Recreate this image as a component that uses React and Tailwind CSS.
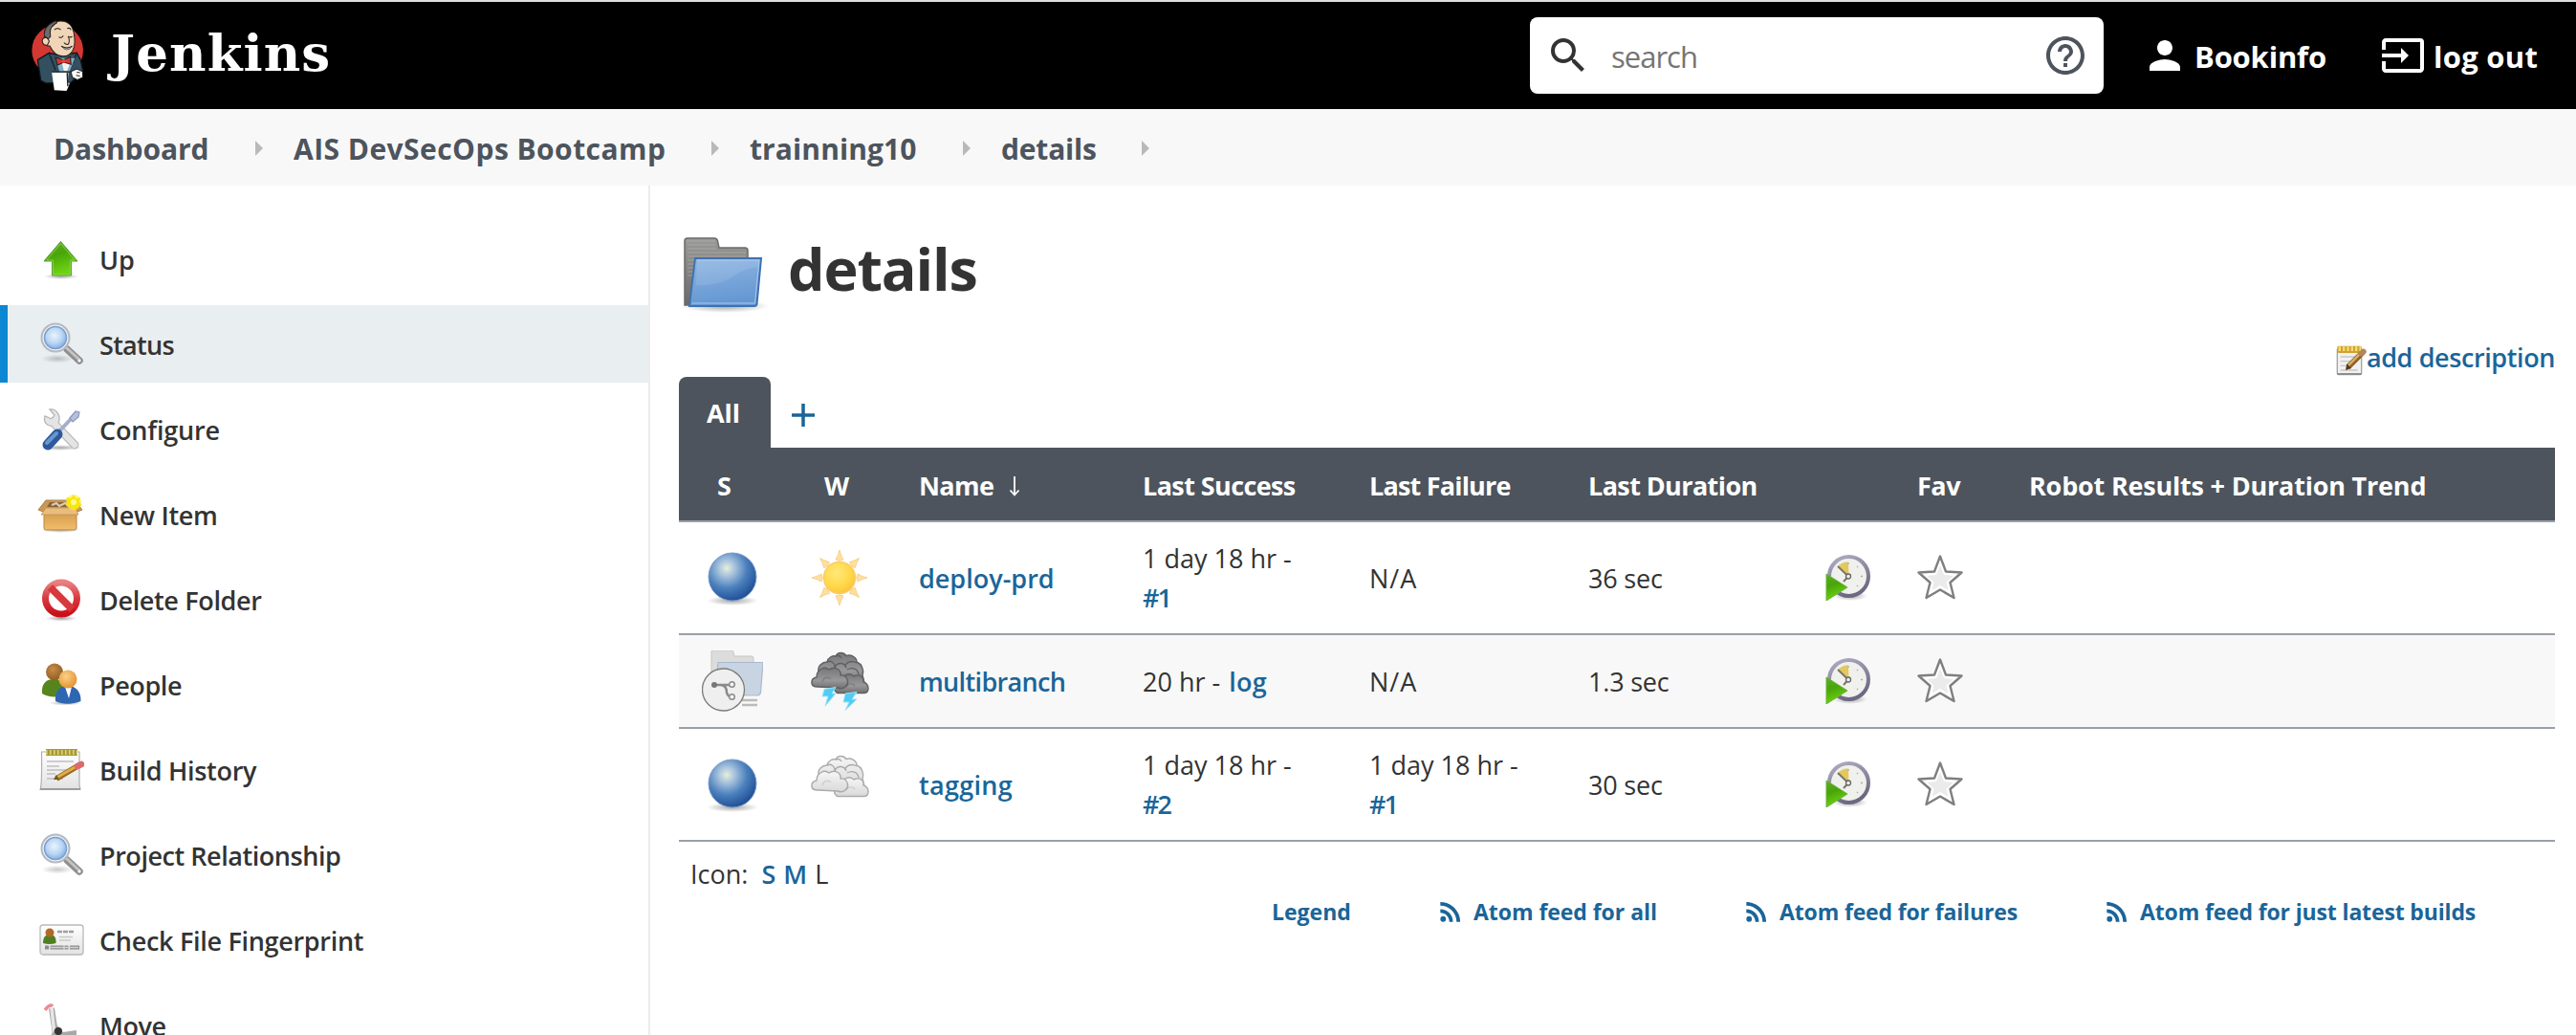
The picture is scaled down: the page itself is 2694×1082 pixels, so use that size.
import { MdSearch, MdHelpOutline, MdPerson, MdInput, MdRssFeed } from "react-icons/md";

function Gradients() {
  return (
    <svg className="absolute h-0 w-0" aria-hidden="true">
      <defs>
        <radialGradient id="ball" cx="0.38" cy="0.32" r="0.7">
          <stop offset="0" stopColor="#e6efdf" />
          <stop offset="0.25" stopColor="#a5c1dc" />
          <stop offset="0.6" stopColor="#4b80bd" />
          <stop offset="1" stopColor="#1f4f96" />
        </radialGradient>
        <radialGradient id="sun" cx="0.4" cy="0.35" r="0.7">
          <stop offset="0" stopColor="#ffe97a" />
          <stop offset="0.6" stopColor="#ffd94a" />
          <stop offset="1" stopColor="#fcc13c" />
        </radialGradient>
        <radialGradient id="lens" cx="0.45" cy="0.4" r="0.6">
          <stop offset="0" stopColor="#eaf4fd" />
          <stop offset="0.6" stopColor="#b9d6f4" />
          <stop offset="1" stopColor="#86b0e2" />
        </radialGradient>
        <radialGradient id="shade">
          <stop offset="0" stopColor="#000" stopOpacity="0.35" />
          <stop offset="1" stopColor="#000" stopOpacity="0" />
        </radialGradient>
        <linearGradient id="green" x1="0" y1="0" x2="0.3" y2="1">
          <stop offset="0" stopColor="#5fae2b" />
          <stop offset="0.45" stopColor="#48a508" />
          <stop offset="1" stopColor="#6fd412" />
        </linearGradient>
        <linearGradient id="red" x1="0" y1="0" x2="0" y2="1">
          <stop offset="0" stopColor="#e98080" />
          <stop offset="0.5" stopColor="#d83a3e" />
          <stop offset="1" stopColor="#c9101a" />
        </linearGradient>
        <linearGradient id="box" x1="0" y1="0" x2="0" y2="1">
          <stop offset="0" stopColor="#d29a4c" />
          <stop offset="1" stopColor="#f2bd6b" />
        </linearGradient>
        <linearGradient id="folderBlue" x1="0" y1="0" x2="0.2" y2="1">
          <stop offset="0" stopColor="#8fb6e2" />
          <stop offset="0.5" stopColor="#7aa6da" />
          <stop offset="1" stopColor="#6497d2" />
        </linearGradient>
        <linearGradient id="folderGray" x1="0" y1="0" x2="0" y2="1">
          <stop offset="0" stopColor="#9a9a97" />
          <stop offset="1" stopColor="#6a6a68" />
        </linearGradient>
        <linearGradient id="dark" x1="0" y1="0" x2="0" y2="1">
          <stop offset="0" stopColor="#77777a" />
          <stop offset="0.6" stopColor="#98989a" />
          <stop offset="1" stopColor="#707073" />
        </linearGradient>
        <linearGradient id="light" x1="0" y1="0" x2="0" y2="1">
          <stop offset="0" stopColor="#f6f6f6" />
          <stop offset="1" stopColor="#d9d9d9" />
        </linearGradient>
        <linearGradient id="paper" x1="0" y1="0" x2="0" y2="1">
          <stop offset="0" stopColor="#ffffff" />
          <stop offset="1" stopColor="#e2e2e2" />
        </linearGradient>
        <radialGradient id="brown" cx="0.4" cy="0.35" r="0.7">
          <stop offset="0" stopColor="#c58c4c" />
          <stop offset="1" stopColor="#8f5a1e" />
        </radialGradient>
        <radialGradient id="orange" cx="0.4" cy="0.35" r="0.7">
          <stop offset="0" stopColor="#fbd08a" />
          <stop offset="1" stopColor="#e3912a" />
        </radialGradient>
        <linearGradient id="rim" x1="0" y1="0" x2="0.4" y2="1">
          <stop offset="0" stopColor="#b0aec3" />
          <stop offset="1" stopColor="#6d6983" />
        </linearGradient>
      </defs>
    </svg>
  );
}

function Butler() {
  return (
    <svg viewBox="34 26 170 232" className="h-[78px] w-[57px]">
      <circle cx="118" cy="126" r="80" fill="#d33833" />
      <path d="M56 156L92 134L118 140L178 134L190 156L197 190L160 226L82 228L66 220Z" fill="#335061" stroke="#101820" strokeWidth="4" />
      <path d="M92 136L112 188M176 138L156 190" stroke="#16242e" strokeWidth="4" />
      <path d="M112 150L172 150L156 192L124 192Z" fill="#81b0c4" />
      <path d="M130 160L160 160L148 190L138 190Z" fill="#f3f3f3" />
      <path d="M84 66C92 40 122 28 146 38C164 46 170 66 171 88C173 116 166 136 146 143C122 148 104 134 94 112C78 114 68 98 78 84Z" fill="#f0d6b7" stroke="#231f20" strokeWidth="3" />
      <path d="M78 82C72 62 88 44 112 34L116 40C102 48 94 58 95 70L96 84L88 90Z" fill="#6d6b6d" stroke="#231f20" strokeWidth="3" />
      <path d="M76 88C66 92 70 112 86 110L92 98C88 86 80 84 76 88Z" fill="#f0d6b7" stroke="#231f20" strokeWidth="3" />
      <path d="M108 62Q118 54 128 62M148 58Q156 54 160 62M122 84Q130 90 136 80M150 82Q158 88 164 82M152 84Q158 100 150 108Q142 108 138 102M130 113Q146 124 164 113" fill="none" stroke="#231f20" strokeWidth="3" />
      <path d="M132 114Q146 125 162 114Q158 124 146 124Q137 122 132 114Z" fill="#fff" stroke="#231f20" strokeWidth="2" />
      <path d="M112 148L136 156L158 146L160 170L138 163L118 172Z" fill="#d33833" stroke="#231f20" strokeWidth="3" />
      <circle cx="137" cy="160" r="6" fill="#ef3d3a" />
      <path d="M100 194L152 194L150 226L156 228L152 240L146 252L108 250Z" fill="#fff" />
      <path d="M100 193H158M148 196L150 238" stroke="#231f20" strokeWidth="4" fill="none" />
      <path d="M160 192L178 184L196 192L197 210L180 218L164 210Z" fill="#fff" stroke="#231f20" strokeWidth="3" />
      <path d="M178 194L188 196M176 204L188 206" stroke="#231f20" strokeWidth="3" />
    </svg>
  );
}

const art = {
  up: (
    <>
      <ellipse cx="24" cy="42" rx="18" ry="3" fill="url(#shade)" />
      <path d="M23.500 5.500L41 26H34.500V41H14.500V26H6Z" fill="url(#green)" stroke="#5d9e3a" strokeWidth="1" />
      <path d="M23.500 7.500L38 25H33.500V40H15.500V25H9Z" fill="none" stroke="#8fd457" strokeWidth="0.800" />
    </>
  ),
  search: (
    <>
      <ellipse cx="20" cy="39" rx="17" ry="4.500" fill="url(#shade)" opacity="0.600" />
      <path d="M30 29L43 41" stroke="#8f8f8f" strokeWidth="7.500" strokeLinecap="round" />
      <path d="M30 28L43 40" stroke="#c4c4c4" strokeWidth="3" strokeLinecap="round" />
      <circle cx="43" cy="41" r="1.600" fill="#fff" />
      <circle cx="18" cy="17" r="14.500" fill="#e9eef5" stroke="#b5b9c0" strokeWidth="2" />
      <circle cx="18" cy="17" r="11.500" fill="url(#lens)" stroke="#7c9fce" strokeWidth="1.500" />
    </>
  ),
  tools: (
    <>
      <ellipse cx="23" cy="43" rx="22" ry="3" fill="url(#shade)" />
      <path d="M15 16L38 40" stroke="#b9b9b9" strokeWidth="9" strokeLinecap="round" />
      <path d="M12 3L17 9L14 13L7 10C5 16 9 21 15 20L21 17C24 11 20 2 12 3Z" fill="#e6e6e6" stroke="#b5b5b5" strokeWidth="1.300" />
      <path d="M15 16L38 40" stroke="#e4e4e4" strokeWidth="6.500" strokeLinecap="round" />
      <path d="M37 10L20 28" stroke="#a5aecb" strokeWidth="4" />
      <path d="M33 12L39 5L43 6L42 11L36 16Z" fill="#b6bfdb" stroke="#8d97bb" strokeWidth="1.200" />
      <path d="M20 29L10 40" stroke="#2d599c" strokeWidth="11" strokeLinecap="round" />
      <path d="M19 28L9 38" stroke="#6796d2" strokeWidth="4" strokeLinecap="round" />
    </>
  ),
  box: (
    <>
      <ellipse cx="23" cy="40" rx="20" ry="3" fill="url(#shade)" />
      <path d="M8 9L38 9L46 19L38 22H8L0 19Z" fill="#c99858" stroke="#b07f3e" />
      <path d="M12 11H34L37 16H9Z" fill="#8a6334" />
      <path d="M14 14L19 12L22 15L28 12L32 15" stroke="#d9cdb9" strokeWidth="2" fill="none" />
      <path d="M6 20H40V38Q40 40 38 40H8Q6 40 6 38Z" fill="url(#box)" stroke="#b98443" />
      <path d="M8 17H39L42 24H3Z" fill="#e8bd80" stroke="#c4924f" strokeWidth="0.800" />
      <circle cx="37" cy="11" r="8" fill="#fbef62" opacity="0.700" />
      <path d="M37 3L39.500 7L44 6L43 11L46 14L41 16L38 20L34 16L29 15L31 10L29 6L34 7Z" fill="#fae800" />
      <circle cx="37" cy="11" r="3" fill="#fdf7a0" />
    </>
  ),
  stop: (
    <>
      <ellipse cx="24" cy="43.500" rx="17" ry="3" fill="url(#shade)" />
      <circle cx="24" cy="22.500" r="16.500" fill="#fff" stroke="url(#red)" strokeWidth="7" />
      <path d="M12.500 11L35.500 34" stroke="#d8383c" strokeWidth="7.500" />
    </>
  ),
  people: (
    <>
      <ellipse cx="28" cy="43" rx="17" ry="2.500" fill="url(#shade)" />
      <path d="M4 33C3 22 9 18 16 18C24 18 29 24 28 34C20 38 10 37 4 33Z" fill="#56851e" />
      <circle cx="17" cy="10.500" r="9" fill="url(#brown)" />
      <path d="M18 41C17 30 23 25 31 25C39 25 45 31 44.500 41C36 44.500 26 44.500 18 41Z" fill="#2f66b2" />
      <path d="M28 26H35L32 38Z" fill="#fff" />
      <circle cx="31" cy="18" r="9.500" fill="url(#orange)" />
    </>
  ),
  notepad: (
    <>
      <path d="M3.500 5H43V40Q44 43 44 44.500H2Q4 40 3.500 5Z" fill="url(#paper)" stroke="#b0b0b0" strokeWidth="1.200" />
      <path d="M2 44H44" stroke="#9c9c9c" strokeWidth="2" />
      <path d="M8 2H41V9H8Z" fill="#a89a34" />
      <path d="M8 5.500H41" stroke="#ded37c" strokeWidth="5" strokeDasharray="1.500 2.500" />
      <path d="M9 15H37M9 20H22M9 24H30M9 28H18M9 33H26" stroke="#bdbdc3" strokeWidth="1.300" />
      <path d="M19 33L41 20" stroke="#9a6a1d" strokeWidth="6" />
      <path d="M20 31.500L41 19.500" stroke="#e0ad49" strokeWidth="3" />
      <path d="M16 34L19 29L22 34Z" fill="#6c5a20" />
      <path d="M41 20L45 18" stroke="#dd6a6a" strokeWidth="6.500" strokeLinecap="round" />
    </>
  ),
  edit: (
    <>
      <rect x="2" y="5" width="38" height="41" rx="2" fill="#f1f1f1" stroke="#a3a3a3" strokeWidth="2" />
      <path d="M2 45H40" stroke="#8d8d8d" strokeWidth="3" />
      <rect x="2" y="1" width="38" height="11" rx="2" fill="#cfa22f" />
      <path d="M4 5.500H39" stroke="#f6dd75" strokeWidth="7" strokeDasharray="3.500 3" />
      <path d="M7 18H32M7 25H24M7 32H20M7 39H34" stroke="#c6c6cc" strokeWidth="2" />
      <path d="M19 34L41 12" stroke="#8d6128" strokeWidth="9" />
      <path d="M19 32L41 10" stroke="#dcae66" strokeWidth="4" />
      <path d="M15 39L17 29L24 36Z" fill="#4b3a22" />
      <path d="M40 13L43 10" stroke="#b0875a" strokeWidth="9" strokeLinecap="round" />
    </>
  ),
  card: (
    <>
      <rect x="2" y="8" width="45" height="31" rx="3" fill="url(#paper)" stroke="#b9b9b9" strokeWidth="1.300" />
      <path d="M5 27C5 20 8 18 12 18C16 18 19 20 18.500 27Q12 29 5 27Z" fill="#4f7f22" />
      <circle cx="12" cy="16" r="4.500" fill="#b06a27" />
      <path d="M20 15H38" stroke="#9f9f9f" strokeWidth="2.500" strokeDasharray="5 1" />
      <path d="M22 20.500H36M22 24H34" stroke="#c9c9c9" strokeWidth="1.300" />
      <path d="M7 31.500H43" stroke="#8c8c8c" strokeWidth="4" strokeDasharray="4 1.500 14 1" />
      <path d="M11 31.500H42" stroke="#d2d2d2" strokeWidth="1.500" />
    </>
  ),
  dolly: (
    <>
      <path d="M14 6L18 33" stroke="#a5a5a5" strokeWidth="6" />
      <path d="M14 6L17 33" stroke="#e6e6e6" strokeWidth="3.500" />
      <path d="M7 8Q12 1 15 4" stroke="#e58e96" strokeWidth="3.500" fill="none" />
      <path d="M14 33L20 24L26 31L40 29V36H12Z" fill="#a8a8a8" />
      <circle cx="21" cy="30" r="4" fill="#333" />
    </>
  ),
};

function Icon({ name, className }) {
  return (
    <svg viewBox="0 0 48 48" className={className || "h-12 w-12 shrink-0"}>
      {art[name]}
    </svg>
  );
}

function Folder() {
  return (
    <svg viewBox="0 0 96 96" className="h-24 w-24 shrink-0">
      <ellipse cx="48" cy="88" rx="46" ry="7" fill="url(#shade)" />
      <path d="M6 87V20Q6 17 9 17H37Q40 17 40.500 20L42 27H69Q72 27 72 30V60L70 87Z" fill="url(#folderGray)" stroke="#6b6b69" strokeWidth="1.500" />
      <path d="M8 20H38M9 24H38M9 28H39M9 32H70M9 36H70M9 40H16M9 44H16M9 48H16M9 52H15M9 56H15" stroke="#b5b5b2" strokeWidth="1" opacity="0.600" />
      <path d="M17 38H86L81.500 86Q81 88 79 88H11Q14 62 17 38Z" fill="url(#folderBlue)" stroke="#3f72b0" strokeWidth="2" />
      <path d="M19 40H84L79.500 85H13.500" fill="none" stroke="#a8c8ee" strokeWidth="1" />
      <path d="M18 66Q40 68 58 56Q70 48 83 47L84 40H19Z" fill="#fff" opacity="0.100" />
    </svg>
  );
}

function Ball() {
  return (
    <svg viewBox="0 0 64 64" className="h-16 w-16">
      <ellipse cx="32" cy="56" rx="27" ry="5" fill="url(#shade)" />
      <circle cx="32" cy="31" r="25" fill="url(#ball)" stroke="#7d9cc8" strokeWidth="1" />
    </svg>
  );
}

function BranchFolder() {
  return (
    <svg viewBox="0 0 64 64" className="h-16 w-16">
      <path d="M10 40V1Q10 0 11 0H31Q33 0 33 2L34 6H52Q54 6 54 8V40Z" fill="#dcdcdb" stroke="#c6c6c6" />
      <path d="M17 12.500H64L61.500 44Q61 46 59 47H14Z" fill="#c8d4e1" stroke="#a9bad0" strokeWidth="1.200" />
      <path d="M42 52H58M42 57H58" stroke="#bdbab6" strokeWidth="2.500" />
      <circle cx="22.500" cy="41" r="22" fill="#efefef" stroke="#7b7b7b" strokeWidth="1.300" />
      <path d="M13 36H30M19 36Q26 36 26 44Q27 48 30 48" fill="none" stroke="#8a8a8a" strokeWidth="2.500" />
      <circle cx="13" cy="36" r="3" fill="#777" />
      <circle cx="31.500" cy="35.500" r="2.800" fill="#f4f4f4" stroke="#8a8a8a" strokeWidth="1.500" />
      <circle cx="31.500" cy="48.500" r="2.800" fill="#f4f4f4" stroke="#8a8a8a" strokeWidth="1.500" />
    </svg>
  );
}

function Sun() {
  const rays = [0, 45, 90, 135, 180, 225, 270, 315];
  return (
    <svg viewBox="0 0 64 64" className="h-16 w-16">
      {rays.map((a) => (
        <path key={a} d="M28 13Q31 8 32 3Q33 8 36 13Q32 15.500 28 13Z" fill="#fce0a0" stroke="#fad28a" strokeWidth="1" transform={`rotate(${a} 32 32)`} />
      ))}
      <circle cx="32" cy="32" r="16.500" fill="url(#sun)" stroke="#fbcb6a" strokeWidth="1.500" />
    </svg>
  );
}

function CloudShape({ fill, line }) {
  return (
    <g fill={fill} stroke={line} strokeWidth="1.400" strokeLinejoin="round">
      <path d="M8 20C7 14 12 10 17 10C18 5 23 3 26 4C28 -0.500 34 -0.500 37 3.500C42 2 48 5 48 10C53 12 56 18 54 24L56 32H6Z" />
      <path d="M17 10C21 8 25 11 25 15M26 4C29 3 31 4 32 6M36 15C36 10 43 8 48 11M25 16C27 10 35 10 37 16M38 18C43 15 49 17 50 23" fill="none" />
      <path d="M27 42C22 38 26 31 33 32C32 24 40 20 45 25C51 22 56 26 55 31C61 33 62 42 56 42.500H28Z" />
      <path d="M7 36C-1.500 36 -0.500 27 6 26C6 18 14 14 19 18C25 14 32 18 31 24C38 23 41 32 36 36Q33 39 28 37Z" />
      <path d="M12 31C13 26 18 25 21 28M37 36C39 32 44 32 46 35" fill="none" opacity="0.400" />
    </g>
  );
}

function Storm() {
  return (
    <svg viewBox="0 0 64 64" className="h-16 w-16">
      <g transform="translate(2 2)">
        <CloudShape fill="url(#dark)" line="#606063" />
      </g>
      <path d="M16 40.500L28 38.500L24 45H28L17 58L20 48H14Z" fill="#4fcdf4" stroke="#9fe3fa" strokeWidth="1" />
      <path d="M38 45L50 43.500L45 51H50L38 62.500L42 54H36Z" fill="#4fcdf4" stroke="#9fe3fa" strokeWidth="1" />
    </svg>
  );
}

function Cloudy() {
  return (
    <svg viewBox="0 0 64 64" className="h-16 w-16">
      <g transform="translate(2 2)">
        <CloudShape fill="url(#light)" line="#ababab" />
      </g>
    </svg>
  );
}

function Schedule() {
  return (
    <svg viewBox="0 0 48 48" className="h-12 w-12">
      <ellipse cx="26" cy="43" rx="18" ry="5" fill="url(#shade)" />
      <circle cx="24.500" cy="22.500" r="20.500" fill="#f0f0ec" stroke="url(#rim)" strokeWidth="4" />
      <path d="M12.500 13Q17 7 24 7.500L24.500 22Z" fill="#e2c85f" />
      <path d="M13 12L24 22.500L19 28" fill="none" stroke="#7a7668" strokeWidth="2" />
      <circle cx="24" cy="22.500" r="2.500" fill="#eee" stroke="#666" strokeWidth="1.300" />
      <path d="M24 8V10M39 22.500H37M34 12L33 13M34 33L33 32" stroke="#aaa" strokeWidth="1.300" />
      <path d="M1 20L23 34L1 48Z" fill="url(#green)" stroke="#6ab43b" strokeWidth="1" />
    </svg>
  );
}

function Star() {
  return (
    <svg viewBox="0 0 48 48" className="h-12 w-12">
      <path d="M24 1.500L30 17.500L46.500 18.500L34.500 29L38.500 45L24 36.500L9.500 45L13.500 29L1.500 18.500L18 17.500Z" fill="#fff" stroke="#7f7f7f" strokeWidth="2.400" strokeLinejoin="round" />
      <path d="M24 11L28 21L38 22L30.500 28.500L32.500 37L24 32L15.500 37L17.500 28.500L10 22L20 21Z" fill="#ebebeb" />
    </svg>
  );
}

const cols = "grid grid-cols-[112px_124px_234px_237px_229px_248px_96px_117px_565px] items-center";

const tasks = [
  ["Up", "up", ""],
  ["Status", "search", "tracking-[-0.7px]"],
  ["Configure", "tools", "tracking-[-0.15px]"],
  ["New Item", "box", "tracking-[-0.3px]"],
  ["Delete Folder", "stop", "tracking-[-0.35px]"],
  ["People", "people", "tracking-[-0.4px]"],
  ["Build History", "notepad", "tracking-[-0.3px]"],
  ["Project Relationship", "search", "tracking-[-0.45px]"],
  ["Check File Fingerprint", "card", "tracking-[-0.3px]"],
  ["Move", "dolly", "tracking-[-0.4px]"],
];

function Crumb({ children, width, tracking }) {
  return (
    <div className={`flex items-center justify-between ${width}`}>
      <span className={tracking}>{children}</span>
      <span className="-mt-[1px] h-0 w-0 border-y-8 border-l-8 border-y-transparent border-l-[#b9b9b9]" />
    </div>
  );
}

function Age({ text, link }) {
  return (
    <div className="pl-[15px] leading-[41.5px]">
      <div className="whitespace-nowrap">{text}</div>
      <a className="font-semibold tracking-[-2px] text-[#1a6599]">{link}</a>
    </div>
  );
}

function Row({ status, weather, name, tracking, success, failure, duration, className }) {
  return (
    <div className={`${cols} border-b-2 border-[#9a9fa8] ${className}`}>
      <div className="pl-6">{status}</div>
      <div className="pl-6">{weather}</div>
      <a className={`pl-[15px] pt-[2px] font-semibold text-[#1a6599] ${tracking}`}>{name}</a>
      {success}
      {failure}
      <div className="pl-[15px] pt-[2px] tracking-[-0.2px]">{duration}</div>
      <div className="pl-[15px]"><Schedule /></div>
      <div className="pl-[15px]"><Star /></div>
      <div />
    </div>
  );
}

function Feed({ children, tracking }) {
  return (
    <a className="flex items-center gap-[8px]">
      <MdRssFeed size={32} />
      <span className={tracking}>{children}</span>
    </a>
  );
}

export default function App() {
  return (
    <div className="flex h-[1082px] w-[2694px] flex-col overflow-hidden whitespace-nowrap bg-white font-['Open_Sans','Noto_Sans',sans-serif] text-[27px] text-[#333]">
      <Gradients />
      <header className="flex h-[114px] shrink-0 items-center border-t-2 border-[#dcdfe2] bg-black text-[31px] font-bold text-white">
        <div className="flex w-[1600px] items-center pl-8">
          <Butler />
          <span className="-mt-[5px] ml-[27px] font-['DejaVu_Serif',serif] text-[53px] leading-none tracking-[1.1px]">Jenkins</span>
        </div>
        <div className="flex h-20 w-[600px] items-center rounded-lg bg-white pl-4 pr-4 font-normal">
          <MdSearch size={48} color="#333" />
          <span className="ml-[21px] mt-[3px] flex-1 tracking-[-1px] text-[#757575]">search</span>
          <MdHelpOutline size={48} color="#4d545d" />
        </div>
        <div className="ml-10 flex items-center">
          <MdPerson size={48} />
          <span className="ml-[7px] mt-[3px] tracking-[-0.2px]">Bookinfo</span>
        </div>
        <div className="ml-[56px] flex items-center">
          <MdInput size={48} />
          <span className="ml-[8px] mt-[3px] tracking-[0.3px]">log out</span>
        </div>
      </header>

      <nav className="flex h-20 shrink-0 gap-8 bg-[#f8f8f8] pl-[56px] pt-[2px] text-[30px] font-bold text-[#4d545d]">
        <Crumb width="w-[219px]" tracking="tracking-[-0.1px]">Dashboard</Crumb>
        <Crumb width="w-[445px]" tracking="tracking-[0.45px]">AIS DevSecOps Bootcamp</Crumb>
        <Crumb width="w-[231px]" tracking="tracking-[0.1px]">trainning10</Crumb>
        <Crumb width="w-[155px]" tracking="tracking-[-0.2px]">details</Crumb>
      </nav>

      <div className="flex min-h-0 flex-1">
        <aside className="flex w-[680px] shrink-0 flex-col gap-2 border-r-2 border-[#ececec] pt-9">
          {tasks.map(([label, icon, tracking]) => (
            <div
              key={label}
              className={`flex h-[81px] shrink-0 items-center gap-4 border-l-8 pl-8 font-semibold ${
                label === "Status" ? "border-[#0b87d3] bg-[#e9eef0]" : "border-transparent"
              }`}
            >
              <Icon name={icon} />
              <span className={`pt-1 ${tracking}`}>{label}</span>
            </div>
          ))}
        </aside>

        <main className="w-[1992px] shrink-0 pl-[30px]">
          <div className="mt-[38px] flex h-24 items-center">
            <Folder />
            <h1 className="ml-[18px] text-[61px] font-bold leading-none tracking-[-1.1px]">details</h1>
          </div>
          <a className="mt-[24px] flex h-[42px] items-center justify-end font-semibold text-[#1a6599]">
            <Icon name="edit" className="mt-[8px] h-8 w-8" />
            <span className="pt-[2px] tracking-[-0.4px]">add description</span>
          </a>

          <div className="flex h-[74px] items-center">
            <div className="flex h-full w-24 items-center justify-center rounded-t-lg bg-[#4d545d] pr-[3px] pt-[2px] font-bold text-white">All</div>
            <svg viewBox="0 0 24 24" className="ml-[22px] mt-[6px] h-6 w-6">
              <path d="M12 0V24M0 12H24" stroke="#1a6599" strokeWidth="3.500" />
            </svg>
          </div>

          <div className={`${cols} h-[78px] border-b-2 border-[#9a9fa8] bg-[#4d545d] pt-[4px] font-bold text-white`}>
            <div className="pl-[40px]">S</div>
            <div className="pl-10">W</div>
            <div className="flex items-center pl-[15px]">
              <span className="tracking-[-0.6px]">Name</span>
              <svg viewBox="0 0 12 22" className="ml-[16px] h-[22px] w-3">
                <path d="M6 1V20M1.500 15.500L6 20.500L10.500 15.500" fill="none" stroke="#fff" strokeWidth="1.800" />
              </svg>
            </div>
            <div className="pl-[15px] tracking-[-0.6px]">Last Success</div>
            <div className="pl-[15px] tracking-[-0.8px]">Last Failure</div>
            <div className="pl-[15px] tracking-[-0.6px]">Last Duration</div>
            <div />
            <div className="pl-[15px] tracking-[-0.5px]">Fav</div>
            <div className="pl-[15px] tracking-[-0.2px]">Robot Results + Duration Trend</div>
          </div>
          <Row
            className="h-[118px]"
            status={<Ball />}
            weather={<Sun />}
            name="deploy-prd"
            tracking=""
            success={<Age text="1 day 18 hr -" link="#1" />}
            failure={<div className="pl-[15px] pt-[2px] tracking-[1px]">N/A</div>}
            duration="36 sec"
          />
          <Row
            className="h-[98px] bg-[#f8f8f8]"
            status={<BranchFolder />}
            weather={<Storm />}
            name="multibranch"
            tracking="tracking-[-0.65px]"
            success={
              <div className="pl-[15px] pt-[2px]">
                20 hr - <a className="pl-[2px] font-semibold tracking-[0.3px] text-[#1a6599]">log</a>
              </div>
            }
            failure={<div className="pl-[15px] pt-[2px] tracking-[1px]">N/A</div>}
            duration="1.3 sec"
          />
          <Row
            className="h-[118px]"
            status={<Ball />}
            weather={<Cloudy />}
            name="tagging"
            tracking="tracking-[0.3px]"
            success={<Age text="1 day 18 hr -" link="#2" />}
            failure={<Age text="1 day 18 hr -" link="#1" />}
            duration="30 sec"
          />

          <div className="mt-[13px] flex h-[42px] items-center pl-[12px]">
            <span>Icon:</span>
            <a className="ml-[14px] font-semibold text-[#1a6599]">S</a>
            <a className="ml-2 font-semibold text-[#1a6599]">M</a>
            <span className="ml-2">L</span>
          </div>
          <div className="-mt-[1px] grid h-[38px] grid-cols-[171px_320px_377px_auto] items-center pl-[620px] text-[23px] font-bold text-[#1a6599]">
            <a>Legend</a>
            <Feed tracking="tracking-[-0.05px]">Atom feed for all</Feed>
            <Feed tracking="tracking-[-0.15px]">Atom feed for failures</Feed>
            <Feed tracking="tracking-[-0.15px]">Atom feed for just latest builds</Feed>
          </div>
        </main>
      </div>
    </div>
  );
}
